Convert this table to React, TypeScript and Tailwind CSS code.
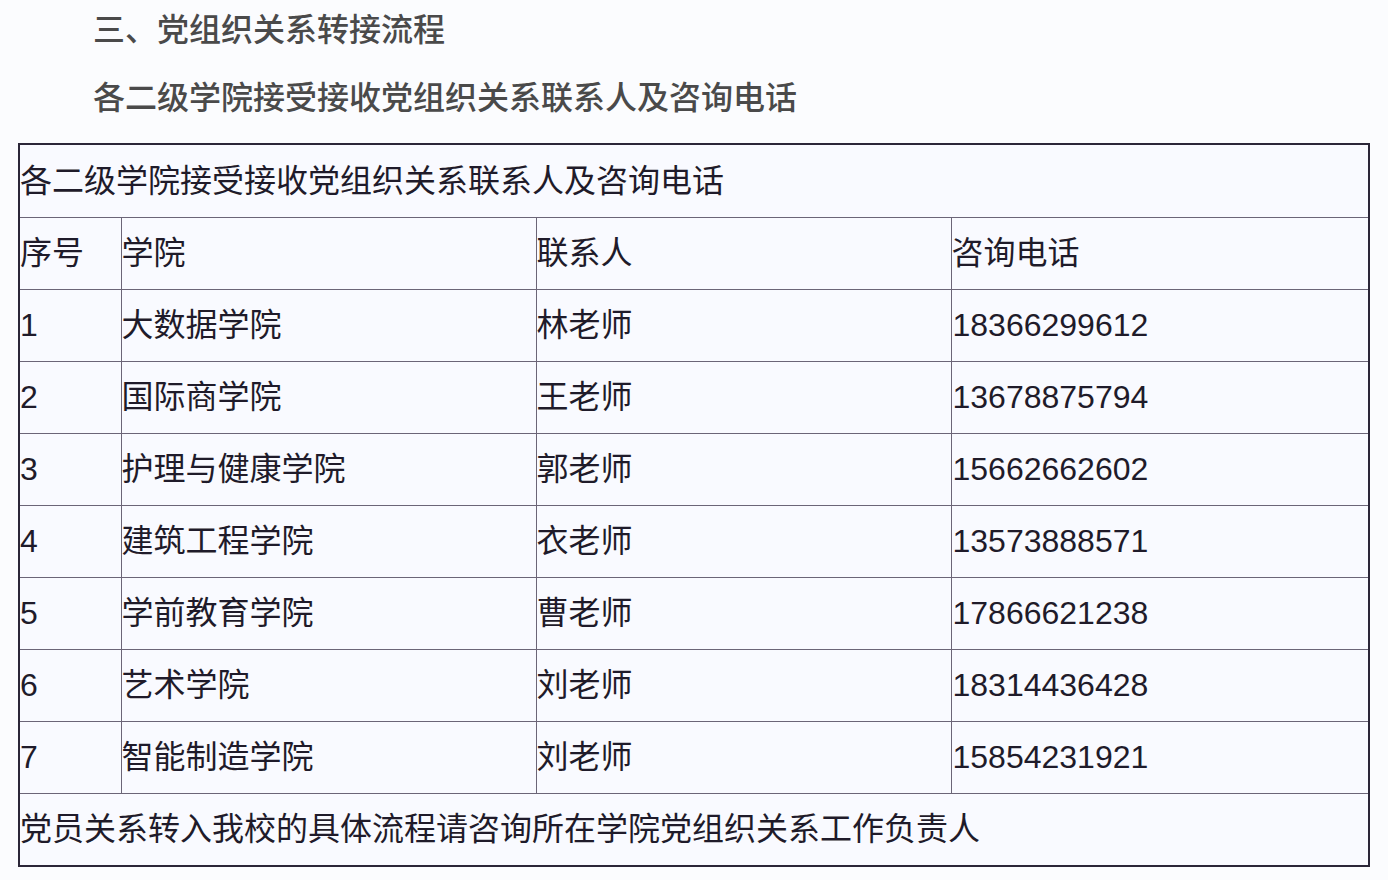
const rows = [
  ['1', '大数据学院', '林老师', '18366299612'],
  ['2', '国际商学院', '王老师', '13678875794'],
  ['3', '护理与健康学院', '郭老师', '15662662602'],
  ['4', '建筑工程学院', '衣老师', '13573888571'],
  ['5', '学前教育学院', '曹老师', '17866621238'],
  ['6', '艺术学院', '刘老师', '18314436428'],
  ['7', '智能制造学院', '刘老师', '15854231921'],
];

const font = "font-['Liberation_Sans','Noto_Sans_CJK_SC',sans-serif]";
const cell = 'h-[72px] p-0 align-middle border border-[#6b6577] text-left font-normal';

const App = () => {
  return (
    <div className={`w-[1388px] h-[880px] bg-[#fbfcfe] overflow-hidden ${font}`}>
      <div className="pl-[93px] pt-[10px] text-[32px] leading-[40px] text-[#4a4a4a] font-medium">
        三、党组织关系转接流程
      </div>
      <div className="pl-[93px] pt-[28px] text-[32px] leading-[40px] text-[#4a4a4a] font-medium">
        各二级学院接受接收党组织关系联系人及咨询电话
      </div>
      <div className="ml-[18px] mt-[25px] w-[1352px] border-2 border-[#2b2638] bg-[#f9faff]">
        <table className="w-full border-collapse table-fixed text-[32px] leading-[40px] text-[#1f1b2a]">
          <colgroup>
            <col className="w-[101px]" />
            <col className="w-[415px]" />
            <col className="w-[415px]" />
            <col />
          </colgroup>
          <tbody>
            <tr>
              <td colSpan={4} className={`${cell} border-t-0 border-l-0 border-r-0`}>
                各二级学院接受接收党组织关系联系人及咨询电话
              </td>
            </tr>
            <tr>
              <th className={`${cell} border-l-0`}>序号</th>
              <th className={cell}>学院</th>
              <th className={cell}>联系人</th>
              <th className={`${cell} border-r-0`}>咨询电话</th>
            </tr>
            {rows.map(r => (
              <tr key={r[0]}>
                <td className={`${cell} border-l-0`}>{r[0]}</td>
                <td className={cell}>{r[1]}</td>
                <td className={cell}>{r[2]}</td>
                <td className={`${cell} border-r-0 pl-[1px]`}>{r[3]}</td>
              </tr>
            ))}
            <tr>
              <td colSpan={4} className={`${cell} border-b-0 border-l-0 border-r-0`}>
                党员关系转入我校的具体流程请咨询所在学院党组织关系工作负责人
              </td>
            </tr>
          </tbody>
        </table>
      </div>
    </div>
  );
};

export default App;
